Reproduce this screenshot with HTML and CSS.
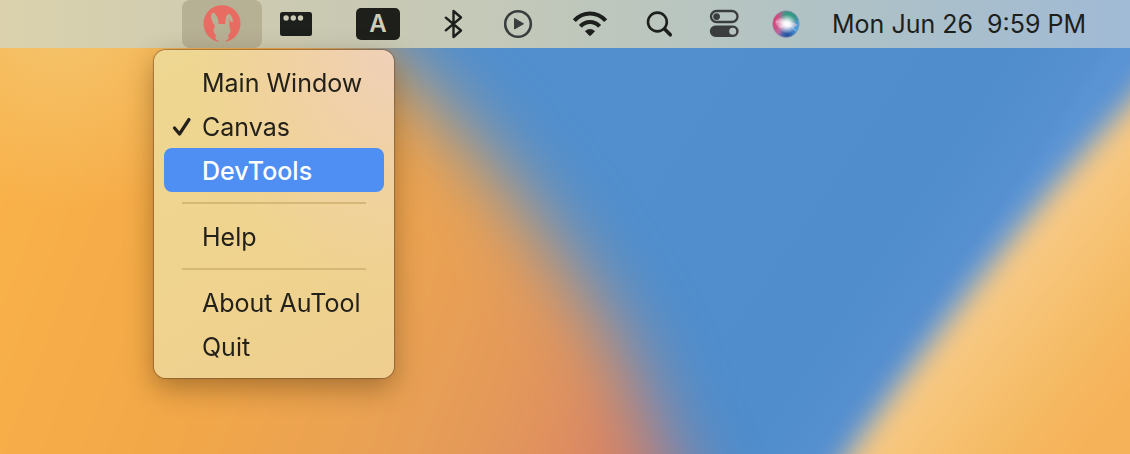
FILE: index.html
```html
<!DOCTYPE html>
<html lang="en">
<head>
<meta charset="utf-8">
<title>AuTool menu</title>
<link rel="stylesheet" href="styles.css">
</head>
<body>
<svg class="wallpaper" viewBox="0 0 1130 454" preserveAspectRatio="none" aria-hidden="true">
  <defs>
    <filter id="soft" x="-20%" y="-30%" width="140%" height="160%" color-interpolation-filters="sRGB"><feGaussianBlur stdDeviation="38"/></filter>
    <filter id="edge" x="-20%" y="-30%" width="140%" height="160%" color-interpolation-filters="sRGB"><feGaussianBlur stdDeviation="14"/></filter>
    <linearGradient id="sky" gradientUnits="userSpaceOnUse" x1="640" y1="80" x2="960" y2="290">
      <stop offset="0" stop-color="#518fce"/><stop offset=".75" stop-color="#4f8dcc"/><stop offset=".96" stop-color="#5690d1"/><stop offset="1" stop-color="#5a94d5"/>
    </linearGradient>
    <linearGradient id="dune" gradientUnits="userSpaceOnUse" x1="0" y1="220" x2="650" y2="470">
      <stop offset="0" stop-color="#f9b149"/><stop offset=".35" stop-color="#f2a748"/><stop offset=".65" stop-color="#e8a055"/><stop offset=".84" stop-color="#e1935d"/><stop offset="1" stop-color="#d57a68"/>
    </linearGradient>
    <radialGradient id="glow" gradientUnits="userSpaceOnUse" cx="60" cy="10" r="200">
      <stop offset="0" stop-color="#f4c56e"/><stop offset="1" stop-color="#f4c56e" stop-opacity="0"/>
    </radialGradient>
    <linearGradient id="sand" gradientUnits="userSpaceOnUse" x1="980" y1="270" x2="1125" y2="390">
      <stop offset="0" stop-color="#f9cb8b"/><stop offset=".25" stop-color="#f7c67c"/><stop offset=".65" stop-color="#f5bb65"/><stop offset="1.000" stop-color="#f6b259"/>
    </linearGradient>
  </defs>
  <rect width="1130" height="454" fill="url(#sky)"/>
  <path d="M-200-120H230L375 48Q450 115 504 180T622 345L678 480L730 620H-200z" fill="url(#dune)" filter="url(#soft)"/>
  <rect width="350" height="220" fill="url(#glow)"/>
  <path d="M1230-20L1137 95Q1057 180 987 270T859 440L777 560H1230z" fill="url(#sand)" filter="url(#edge)"/>
</svg>

<header class="menubar">
  <div class="app">
    <button class="app-button" aria-label="AuTool" aria-haspopup="menu" aria-expanded="true">
      <svg width="40" height="48" viewBox="202 0 40 48">
        <circle cx="222" cy="23.700" r="18.500" fill="#e96c62"/>
        <g fill="#b6b095">
          <path d="M212.500 12.700Q215 12.300 217 16.500Q218.800 20 218.800 25L215.500 27Q211.500 22 211 17Q211 13.500 212.500 12.700z"/>
          <path d="M225.300 26Q225 20 226.200 16.500Q227.200 13.500 229.500 14Q231 14.500 232 17.500Q233.600 21 232.400 22.300Q230.500 22.600 228.300 18.500Q229.800 22.500 229.500 27z"/>
          <path d="M217.500 24H226.500Q230.500 27 230.500 30.500Q230.500 33.500 228 35.500Q229 37 228.500 38.500Q227.500 40 225.500 41L226.500 43H217.500L218.500 41Q216.500 40 215.500 38.500Q215 37 216 35.500Q213.500 33.500 213.500 30.500Q213.500 27 217.500 24z"/>
        </g>
      </svg>
    </button>
    <div class="menu" role="menu" aria-label="AuTool">
      <button class="menu-item" role="menuitem">Main Window</button>
      <button class="menu-item" role="menuitemcheckbox" aria-checked="true">
        <svg class="check" width="20" height="20" viewBox="0 0 20 20" aria-hidden="true"><path d="M2.500 11L7.500 17L17 2.500" fill="none" stroke="currentColor" stroke-width="3.200" stroke-linecap="round" stroke-linejoin="round"/></svg>
        Canvas
      </button>
      <button class="menu-item selected" role="menuitem">DevTools</button>
      <hr class="separator">
      <button class="menu-item" role="menuitem">Help</button>
      <hr class="separator">
      <button class="menu-item" role="menuitem">About AuTool</button>
      <button class="menu-item" role="menuitem">Quit</button>
    </div>
  </div>
  <button class="status" aria-label="Windows">
    <svg width="46" height="48" viewBox="278 0 46 48"><path fill-rule="evenodd" d="M282.500 12H309.500Q312 12 312 14.500V33.500Q312 36 309.500 36H282.500Q280 36 280 33.500V14.500Q280 12 282.500 12zM283.400 18a2.700 2.700 0 1 0 5.400 0a2.700 2.700 0 1 0-5.400 0zM290.600 18a2.700 2.700 0 1 0 5.400 0a2.700 2.700 0 1 0-5.400 0zM297.800 18a2.700 2.700 0 1 0 5.400 0a2.700 2.700 0 1 0-5.400 0z"/></svg>
  </button>
  <button class="status" aria-label="Input source"><span class="input-source">A</span></button>
  <button class="status" aria-label="Bluetooth">
    <svg width="36" height="48" viewBox="432 0 36 48"><path d="M445.800 17.700L461 30.500L453.500 37V11L461 17.500L445.800 30.300" fill="none" stroke="currentColor" stroke-width="2.400" stroke-linecap="round" stroke-linejoin="round"/></svg>
  </button>
  <button class="status dim" aria-label="Now playing">
    <svg width="36" height="48" viewBox="500 0 36 48"><circle cx="518" cy="24" r="12.800" fill="none" stroke="currentColor" stroke-width="2.600"/><path d="M514.500 18.500L523.500 23.800L514.500 29z" stroke="currentColor" stroke-linejoin="round"/></svg>
  </button>
  <button class="status" aria-label="Wi-Fi">
    <svg width="44" height="48" viewBox="568 0 44 48"><g fill="none" stroke="currentColor" stroke-width="4.200"><path d="M574.300 20.600Q581 13.500 590 13.500T605.700 20.600"/><path d="M580.400 26.400Q584.500 22 590 22T599.600 26.400"/></g><path d="M585.300 31.200Q587.500 29.300 590 29.300T594.700 31.200L590.800 35.300Q590 36 589.200 35.300z" stroke="currentColor" stroke-width=".6"/></svg>
  </button>
  <button class="status" aria-label="Search">
    <svg width="32" height="48" viewBox="644 0 32 48"><g fill="none" stroke="currentColor" stroke-linecap="round"><circle cx="657.400" cy="22" r="9.400" stroke-width="2.600"/><path d="M664.800 29.300L670.300 34.800" stroke-width="3.600"/></g></svg>
  </button>
  <button class="status dim" aria-label="Control Center">
    <svg width="32" height="48" viewBox="708 0 32 48"><rect x="711" y="11" width="26.500" height="11" rx="5.500" fill="none" stroke="currentColor" stroke-width="2.300"/><circle cx="716.600" cy="16.600" r="3.400"/><path fill-rule="evenodd" d="M715.500 25.500H733a5.700 5.700 0 0 1 0 11.400H715.500a5.700 5.700 0 0 1 0-11.400zM729.200 31.200a3.500 3.500 0 1 0 7 0a3.500 3.500 0 1 0-7 0z"/></svg>
  </button>
  <button class="status" aria-label="Siri">
    <svg width="28" height="48" viewBox="772 0 28 48">
      <defs>
        <linearGradient id="orb" x1="0" y1=".35" x2="1" y2=".65"><stop offset="0" stop-color="#e2346c"/><stop offset=".38" stop-color="#bb74a5"/><stop offset=".6" stop-color="#4977b8"/><stop offset="1" stop-color="#4aa9e4"/></linearGradient>
        <radialGradient id="orb-green" cx=".65" cy=".16" r=".45"><stop offset="0" stop-color="#2b9e80"/><stop offset=".5" stop-color="#399781" stop-opacity=".85"/><stop offset="1" stop-color="#399781" stop-opacity="0"/></radialGradient>
        <radialGradient id="orb-blue" cx=".55" cy=".95" r=".4"><stop offset="0" stop-color="#264d9b"/><stop offset="1" stop-color="#2858a7" stop-opacity="0"/></radialGradient>
        <radialGradient id="orb-light" cx=".54" cy=".5" r=".36"><stop offset="0" stop-color="#fff"/><stop offset=".3" stop-color="#fff" stop-opacity=".9"/><stop offset="1" stop-color="#fff" stop-opacity="0"/></radialGradient>
      </defs>
      <circle cx="786" cy="24" r="13.300" fill="url(#orb)"/><circle cx="786" cy="24" r="13.300" fill="url(#orb-green)"/><circle cx="786" cy="24" r="13.300" fill="url(#orb-blue)"/>
      <path d="M775 22Q780 14 787 23Q793 21 798 25Q791 29 786 25Q780 32 775 22z" fill="#f3bdd3" opacity=".5"/><path d="M776 22Q786 20 796 31" fill="none" stroke="#e8e7f5" opacity=".5"/>
      <circle cx="786" cy="24" r="13.300" fill="url(#orb-light)"/><circle cx="786" cy="24" r="13.300" fill="none" stroke="#8e96b3" opacity=".6"/>
    </svg>
  </button>
  <time class="clock" datetime="2023-06-26T21:59">Mon Jun 26&nbsp; 9:59 PM</time>
</header>
</body>
</html>
```
FILE: styles.css
```css
* {
  box-sizing: border-box;
}

body {
  margin: 0;
  min-height: 100vh;
  overflow: hidden;
  background: #4f8dcc;
  color: #1d1f1d;
  font-family: Inter, "Liberation Sans", sans-serif;
  font-size: 25px;
  line-height: 32px;
}

button {
  margin: 0;
  padding: 0;
  border: 0;
  background: none;
  color: inherit;
  font: inherit;
}

svg {
  display: block;
  fill: currentColor;
}

.wallpaper {
  position: fixed;
  inset: 0;
  z-index: -1;
  width: 100%;
  height: 100%;
}

.menubar {
  display: flex;
  justify-content: flex-end;
  align-items: center;
  height: 48px;
  padding-right: 38px;
  background: linear-gradient(90deg, #dbd2ad, #cac9b2 28%, #c5c9b8 42%, #b8c5c0 62%, #abc0c9 80%, #a1bad5);
}

.app {
  position: relative;
}

.app-button {
  display: flex;
  justify-content: center;
  width: 80px;
  height: 48px;
  border-radius: 8px;
  background: #b6b095;
}

.status {
  flex: none;
  padding: 0 16px;
}

.dim {
  color: #393d3d;
}

.input-source {
  display: block;
  width: 44px;
  border-radius: 5px;
  background: #1e1f1b;
  color: #cdceba;
  font-size: 24px;
  font-weight: 600;
}

.clock {
  min-width: 260px;
  margin-left: 16px;
  white-space: nowrap;
}

.menu {
  position: absolute;
  top: 50px;
  left: -28px;
  width: 240px;
  padding: 10px;
  border-radius: 12px;
  background: radial-gradient(ellipse 200px 240px at 100% 0, #f0d0b8, #f0d29e 60%, transparent), linear-gradient(150deg, #eed792, #efd38e 60%, #efce90);
  box-shadow: 0 0 1px 1px #63482f80, 0 10px 28px #50320c70;
}

.menu-item {
  display: block;
  position: relative;
  width: 100%;
  height: 44px;
  padding: 2px 0 0 38px;
  border-radius: 8px;
  color: #23211a;
  text-align: left;
  white-space: nowrap;
}

.selected {
  background: #4f8ff3;
  color: #fff;
  font-weight: 500;
}

.check {
  position: absolute;
  top: 13px;
  left: 8px;
}

.separator {
  height: 2px;
  margin: 10px 18px;
  border: 0;
  background: #d5b878;
}
```
